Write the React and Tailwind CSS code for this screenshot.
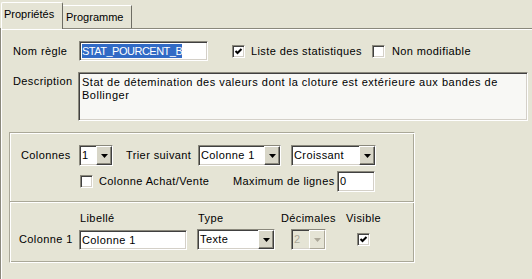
import { useState } from "react";

const sunken =
  "border border-t-[#8a887c] border-l-[#8a887c] border-b-white border-r-white shadow-[inset_1px_1px_0_#404040,inset_-1px_-1px_0_#d4d0c8]";

function Check({ checked }) {
  return (
    <span className={`w-[13px] h-[13px] bg-white shrink-0 flex items-center justify-center ${sunken}`}>
      {checked && (
        <svg width="9" height="9" viewBox="0 0 9 9">
          <path d="M1.5 4 L3.5 6 L7.5 2" stroke="#000" strokeWidth="2" fill="none" />
        </svg>
      )}
    </span>
  );
}

function Arrow({ disabled }) {
  return (
    <span
      className={`w-[16px] h-full border flex items-center justify-center ${
        disabled
          ? "bg-[#e5e4d5] border-t-white border-l-white border-b-[#aca899] border-r-[#aca899]"
          : "bg-[#d8d6c8] border-t-white border-l-white border-b-[#404040] border-r-[#404040] shadow-[inset_-1px_-1px_0_#8a887c]"
      }`}
    >
      <svg width="7" height="4" viewBox="0 0 7 4">
        <path d="M0 0 H7 L3.5 4 Z" fill={disabled ? "#aca899" : "#000"} />
      </svg>
    </span>
  );
}

function Select({ value, width, disabled }) {
  return (
    <div
      className={`h-[21px] shrink-0 flex items-stretch ${sunken} ${disabled ? "bg-[#e5e4d5] text-[#aca899]" : "bg-white"}`}
      style={{ width }}
    >
      <span className="flex-1 pl-[2px] leading-[19px] overflow-hidden whitespace-nowrap">{value}</span>
      <Arrow disabled={disabled} />
    </div>
  );
}

export default function App() {
  const [tab] = useState("props");

  return (
    <div className="w-[532px] h-[279px] overflow-hidden bg-[#e5e4d5] text-[11px] tracking-[0.4px] text-black font-['Liberation_Sans',Arial,sans-serif]">
      {/* tabs */}
      <div className="h-[28px] flex items-end pl-[1px]">
        <div className="w-[62px] h-[27px] border-t border-l border-white border-r border-r-[#6e6d64] rounded-t-[2px] pl-[2px] pt-[3px] relative top-[1px] bg-[#e5e4d5] tracking-normal">
          {tab === "props" && "Propriétés"}
        </div>
        <div className="w-[69px] h-[23px] border-t border-r border-t-white border-r-[#6e6d64] pl-[3px] pt-[3px] tracking-normal">
          Programme
        </div>
      </div>

      {/* panel */}
      <div className="h-[251px] border-t border-l border-[#8a887c] shadow-[inset_1px_1px_0_white] pl-[8px] pt-[12px]">
        <div className="flex items-center h-[20px] pl-[4px]">
          <span className="w-[66px] shrink-0">Nom règle</span>
          <div className={`w-[129px] h-[20px] bg-white pl-[2px] flex items-center ${sunken}`}>
            <span className="bg-[#316ac5] text-white leading-[14px] tracking-[-0.5px]">STAT_POURCENT_B</span>
          </div>
          <div className="ml-[24px] flex items-center gap-[6px]">
            <Check checked />
            <span>Liste des statistiques</span>
          </div>
          <div className="ml-[10px] flex items-center gap-[7px]">
            <Check />
            <span>Non modifiable</span>
          </div>
        </div>

        <div className="flex mt-[11px] pl-[4px]">
          <span className="w-[65px] shrink-0 pt-[1px]">Description</span>
          <div className={`w-[450px] h-[49px] bg-[#f8f8f5] px-[3px] pt-[3px] leading-[13px] tracking-[0.5px] ${sunken}`}>
            Stat de détemination des valeurs dont la cloture est extérieure aux bandes de Bollinger
          </div>
        </div>

        {/* group box */}
        <div className="mt-[11px] w-[406px] h-[131px] border border-t-[#aaa898] border-l-[#aaa898] border-b-white border-r-white shadow-[inset_1px_1px_0_white,inset_-1px_-1px_0_#aaa898]">
          <div className="flex items-center h-[21px] mt-[12px] pl-[11px]">
            <span className="w-[58px] shrink-0">Colonnes</span>
            <Select value="1" width={34} />
            <span className="ml-[13px] w-[72px] shrink-0 whitespace-nowrap">Trier suivant</span>
            <Select value="Colonne 1" width={83} />
            <span className="ml-[10px]">
              <Select value="Croissant" width={85} />
            </span>
          </div>
          <div className="grid grid-cols-[13px_140px_104px_38px] items-center h-[21px] mt-[5px] pl-[70px]">
            <Check />
            <span className="pl-[6px] whitespace-nowrap">Colonne Achat/Vente</span>
            <span className="whitespace-nowrap">Maximum de lignes</span>
            <div className={`w-[38px] h-[21px] bg-white pl-[2px] leading-[19px] ${sunken}`}>0</div>
          </div>

          <div className="mt-[9px] h-[2px] border-t border-[#aaa898] border-b border-b-white" />

          <div className="flex mt-[7px] h-[13px] pl-[70px]">
            <span className="w-[118px] shrink-0">Libellé</span>
            <span className="w-[83px] shrink-0">Type</span>
            <span className="w-[65px] shrink-0">Décimales</span>
            <span>Visible</span>
          </div>
          <div className="flex items-center h-[21px] mt-[6px] pl-[9px]">
            <span className="w-[60px] shrink-0">Colonne 1</span>
            <div className={`w-[108px] h-[20px] bg-white pl-[2px] leading-[18px] ${sunken}`}>Colonne 1</div>
            <span className="ml-[10px]">
              <Select value="Texte" width={78} />
            </span>
            <span className="ml-[16px]">
              <Select value="2" width={35} disabled />
            </span>
            <span className="ml-[31px]">
              <Check checked />
            </span>
          </div>
        </div>
      </div>
    </div>
  );
}
